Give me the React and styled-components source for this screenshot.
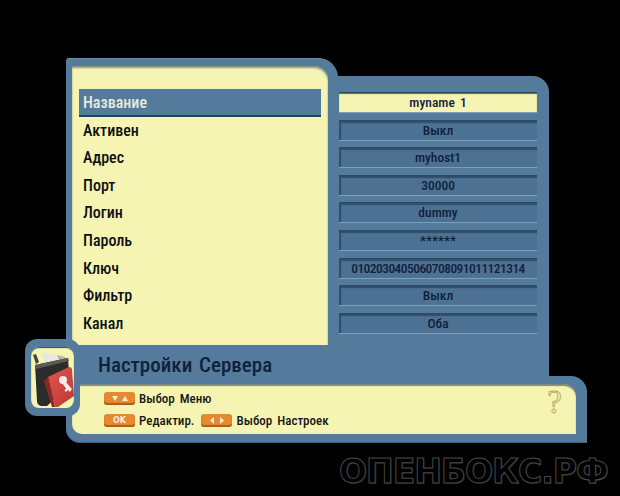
import React from "react";
import styled, { createGlobalStyle } from "styled-components";

const BLUE = "#557b9c";
const CREAM = "#f6f4b2";
const NAVY = "#10213c";

const fields = [
  ["Название", "myname 1"],
  ["Активен", "Выкл"],
  ["Адрес", "myhost1"],
  ["Порт", "30000"],
  ["Логин", "dummy"],
  ["Пароль", "******"],
  ["Ключ", "0102030405060708091011121314"],
  ["Фильтр", "Выкл"],
  ["Канал", "Оба"],
];

const FolderIcon = () => (
  <svg width="43" height="61" viewBox="0 0 43 61">
    <defs>
      <linearGradient id="book" x1="0" y1="0" x2="1" y2="1">
        <stop offset="0" stopColor="#e2544c" />
        <stop offset="1" stopColor="#b93a34" />
      </linearGradient>
    </defs>
    <path d="M11 6 L27 8 L33 16 L14 20 Z" fill="#e8e8e0" />
    <path d="M26 8 L34 10 L38 24 L32 22 Z" fill="#b7b7ab" />
    <path d="M2 8 L5 7 L8 15 L5 17 Z" fill="#44443e" />
    <path d="M4 18 L37 11 L38 26 L38 38 L16 59 L10 59 Q6 58 6 54 Z" fill="#2c2c2a" />
    <path d="M4 18 L37 11 L38 14 L5 22 Z" fill="#5c5c56" />
    <path d="M17 30 L38 20 Q41 20 41 23 L43 49 L27 60 L24 60 Z" fill="url(#book)" />
    <path d="M17 30 L24 60 L21 60 L13 34 Z" fill="#8a2a26" />
    <circle cx="32" cy="33" r="4" fill="#f3ecec" />
    <path d="M34 34 L41 42 L39 45 L37 43 L35 45 L33.5 43.5 L35 41.5 L31 36 Z" fill="#f3ecec" />
  </svg>
);

const Arrow = ({ dir }) => {
  const points = {
    down: "1,2 7,2 4,7",
    up: "1,7 7,7 4,2",
    left: "6,1 6,8 2,4.5",
    right: "2,1 2,8 6,4.5",
  }[dir];
  return (
    <svg width="8" height="9" viewBox="0 0 8 9">
      <polygon points={points} fill="#fbeed2" />
    </svg>
  );
};

const App = () => {
  return (
    <Page>
      <GlobalStyle />
      <Window>
        <Top>
          <ListPanel>
            <List>
              {fields.map(([name], i) => (
                <ListRow key={name} $active={i === 0}>
                  {name}
                </ListRow>
              ))}
            </List>
          </ListPanel>
          <ValuePanel>
            {fields.map(([name, value], i) => (
              <ValueRow key={name} $active={i === 0} $long={value.length > 20}>
                {value}
              </ValueRow>
            ))}
          </ValuePanel>
        </Top>
        <TitleBar>Настройки Сервера</TitleBar>
        <Footer>
          <Hints>
            <HintLine>
              <KeyCap>
                <Arrow dir="down" />
                <Arrow dir="up" />
              </KeyCap>
              <span>Выбор Меню</span>
            </HintLine>
            <HintLine>
              <KeyCap>OK</KeyCap>
              <span>Редактир.</span>
              <KeyCap $gap>
                <Arrow dir="left" />
                <Arrow dir="right" />
              </KeyCap>
              <span>Выбор Настроек</span>
            </HintLine>
            <Help>?</Help>
          </Hints>
        </Footer>
        <Badge>
          <BadgeInner>
            <FolderIcon />
          </BadgeInner>
        </Badge>
      </Window>
      <Watermark>ОПЕНБОКС.РФ</Watermark>
    </Page>
  );
};

export default App;

const GlobalStyle = createGlobalStyle`
  html, body {
    margin: 0;
    background: #000;
  }
`;

const Page = styled.div`
  width: 620px;
  height: 496px;
  box-sizing: border-box;
  padding: 58px 0 0 66px;
  overflow: hidden;
  background: #000;
  font-family: "Roboto", "DejaVu Sans Condensed", sans-serif;
  font-stretch: 75%;
  font-weight: 500;
  word-spacing: 2px;
  color: ${NAVY};
`;

const Window = styled.div`
  position: relative;
  width: 521px;
`;

const Top = styled.div`
  display: flex;
  width: 483px;
  height: 287px;
`;

const ListPanel = styled.div`
  width: 272px;
  box-sizing: border-box;
  padding: 7px 10px 0 6px;
  background: ${BLUE};
  border-top: 1px solid #6a8fae;
  border-radius: 3px 20px 0 0;
`;

const List = styled.div`
  height: 100%;
  box-sizing: border-box;
  padding: 23px 7px 0;
  background: ${CREAM};
  border-radius: 0 14px 0 0;
  box-shadow: inset 0 2px 2px rgba(30, 50, 70, 0.5);
`;

const ListRow = styled.div`
  height: 27.6px;
  line-height: 28px;
  padding-left: 4px;
  font-size: 16px;
  color: ${(p) => (p.$active ? "#e6ecdc" : "#0b0f14")};
  background: ${(p) => (p.$active ? BLUE : "transparent")};
  box-shadow: ${(p) => (p.$active ? "inset 0 -2px 0 #24405a" : "none")};
`;

const ValuePanel = styled.div`
  flex: 1;
  margin-top: 18px;
  box-sizing: border-box;
  padding-top: 16px;
  background: ${BLUE};
  border-radius: 0 16px 0 0;
  display: flex;
  flex-direction: column;
  gap: 6.6px;
`;

const ValueRow = styled.div`
  width: 198px;
  height: 21px;
  box-sizing: border-box;
  margin-left: 1px;
  line-height: 19px;
  text-align: center;
  font-size: 13.5px;
  letter-spacing: ${(p) => (p.$long ? "-0.55px" : "0")};
  white-space: nowrap;
  background: ${(p) => (p.$active ? CREAM : "#4d7193")};
  box-shadow: ${(p) =>
    p.$active ? "inset 0 1px 1px #5d6a4c" : "inset 2px 2px 1px #2f4e6b"};
  border-top: 1px solid #2b4a66;
  border-bottom: 1px solid #7aa0bf;
`;

const TitleBar = styled.div`
  width: 483px;
  height: 31px;
  box-sizing: border-box;
  padding-left: 32px;
  background: ${BLUE};
  font-size: 21px;
  line-height: 40px;
  color: ${NAVY};
`;

const Footer = styled.div`
  box-sizing: border-box;
  height: 67px;
  padding: 8px 11px 8px 6px;
  background: ${BLUE};
  border-radius: 0 16px 0 14px;
  border-bottom: 1px solid #3d5f7c;
`;

const Hints = styled.div`
  position: relative;
  height: 100%;
  box-sizing: border-box;
  padding: 7px 0 0 32px;
  background: ${CREAM};
  border-radius: 0 12px 0 10px;
  box-shadow: inset 0 2px 1px rgba(30, 50, 70, 0.55);
  display: flex;
  flex-direction: column;
  gap: 8px;
`;

const HintLine = styled.div`
  display: flex;
  align-items: center;
  height: 14px;
  font-size: 13px;
  color: #15171a;
`;

const KeyCap = styled.span`
  display: inline-flex;
  align-items: center;
  justify-content: center;
  gap: 2px;
  width: 31px;
  height: 13px;
  margin: 0 4px 0 ${(p) => (p.$gap ? "7px" : "0")};
  border-radius: 3px;
  background: #e58a30;
  box-shadow: inset 0 -2px 1px #ad5f14;
  font-family: "DejaVu Sans", sans-serif;
  font-stretch: normal;
  font-size: 8px;
  font-weight: 700;
  color: #fbeed2;
`;

const Help = styled.span`
  position: absolute;
  right: 14px;
  top: 0;
  font-family: "Liberation Serif", serif;
  font-size: 33px;
  font-weight: 400;
  line-height: 36px;
  color: #eee9a4;
  -webkit-text-stroke: 0.8px #b3aa5e;
`;

const Badge = styled.div`
  position: absolute;
  left: -41px;
  top: 281px;
  width: 55px;
  height: 77px;
  box-sizing: border-box;
  padding: 8px 6px;
  background: ${BLUE};
  border-radius: 12px;
`;

const BadgeInner = styled.div`
  height: 61px;
  background: ${CREAM};
  border-radius: 8px;
  box-shadow: inset 0 1px 1px #2c4a66;
  overflow: hidden;
`;

const Watermark = styled.div`
  margin: 13px 0 0 273px;
  font-family: "DejaVu Sans", sans-serif;
  font-stretch: normal;
  font-size: 33px;
  font-weight: 700;
  line-height: 32px;
  white-space: nowrap;
  word-spacing: 0;
  letter-spacing: -1px;
  color: #000;
  -webkit-text-stroke: 1px #484848;
  text-shadow: 1px 1px 0 #1c1c1c;
`;
